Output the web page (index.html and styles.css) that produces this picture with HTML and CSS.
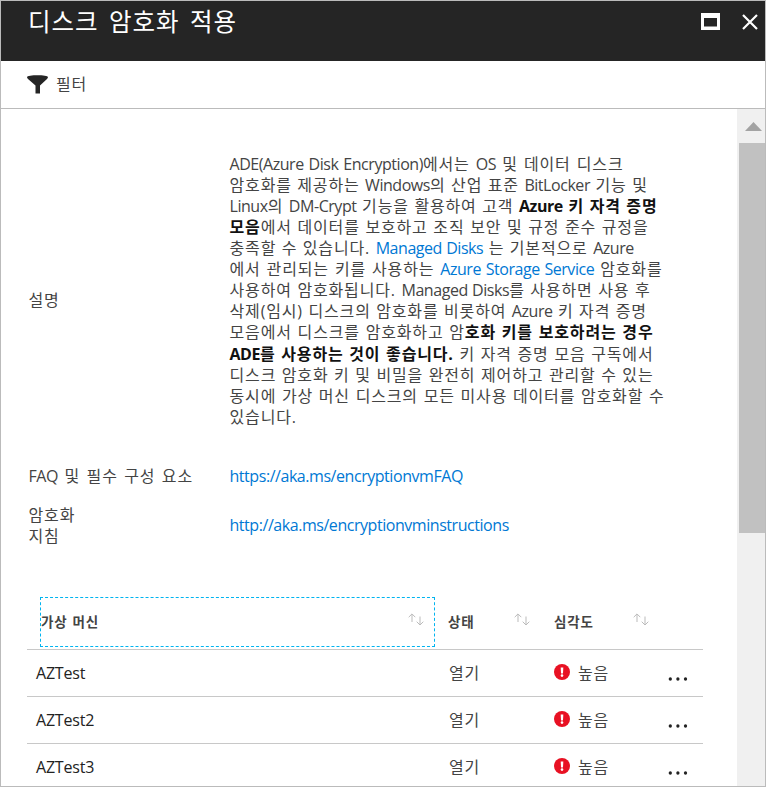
FILE: index.html
```html
<!DOCTYPE html>
<html lang="ko">
<head>
<meta charset="utf-8">
<title>디스크 암호화 적용</title>
<link rel="stylesheet" href="styles.css">
</head>
<body>
<svg width="0" height="0" class="defs">
  <symbol id="sort" viewBox="0 0 16 13"><path d="M4 9V1M.7 4.200L4 .9l3.300 3.300M12 3.500v8.300M8.700 8.700L12 12l3.300-3.300" fill="none" stroke="#bbb" stroke-width="1"/></symbol>
  <symbol id="alert" viewBox="0 0 16 16"><circle cx="8" cy="8" r="8" fill="#e81123"/><path d="M6.700 3.500h2.600L9 9.500H7z" fill="#fff"/><circle cx="8" cy="11.600" r="1.300" fill="#fff"/></symbol>
  <symbol id="more" viewBox="0 0 20 4"><g fill="#222"><circle cx="2.300" cy="2" r="1.650"/><circle cx="9.900" cy="2" r="1.650"/><circle cx="17.500" cy="2" r="1.650"/></g></symbol>
</svg>
<div class="blade">
  <header class="titlebar">
    <h1>디스크 암호화 적용</h1>
    <div class="window-buttons">
      <svg width="19" height="17" viewBox="0 0 19 17"><path fill="#fff" fill-rule="evenodd" d="M0 0h19v17H0zM3 5v8.500h13V5z"/></svg>
      <svg width="16" height="16" viewBox="0 0 16 16"><path d="M1 1l14 14M15 1L1 15" stroke="#fff" stroke-width="2.200" fill="none"/></svg>
    </div>
  </header>
  <div class="toolbar">
    <svg width="21" height="19" viewBox="0 0 21 19"><path fill="#252525" d="M0 2C0-.4 21-.4 21 2c0 .8-.5 1.400-1 2L13 10.500V18.500H8.500V10.500L1 4Q0 3 0 2z"/></svg>
    <span>필터</span>
  </div>
  <div class="body">
    <main class="content">
      <dl class="details">
        <dt>설명</dt>
        <dd class="description">
          <div><i>ADE(Azure Disk Encryption)</i>에서는 <i>OS</i> 및 데이터 디스크</div>
          <div>암호화를 제공하는 <i>Windows</i>의 산업 표준 <i>BitLocker</i> 기능 및</div>
          <div><i>Linux</i>의 <i>DM-Crypt</i> 기능을 활용하여 고객 <b><i>Azure</i> 키 자격 증명</b></div>
          <div><b>모음</b>에서 데이터를 보호하고 조직 보안 및 규정 준수 규정을</div>
          <div>충족할 수 있습니다. <a><i>Managed Disks</i></a> 는 기본적으로 <i>Azure</i></div>
          <div>에서 관리되는 키를 사용하는 <a><i>Azure Storage Service</i></a> 암호화를</div>
          <div>사용하여 암호화됩니다. <i>Managed Disks</i>를 사용하면 사용 후</div>
          <div>삭제(임시) 디스크의 암호화를 비롯하여 <i>Azure</i> 키 자격 증명</div>
          <div>모음에서 디스크를 암호화하고 암<b>호화 키를 보호하려는 경우</b></div>
          <div><b><i>ADE</i>를 사용하는 것이 좋습니다.</b> 키 자격 증명 모음 구독에서</div>
          <div>디스크 암호화 키 및 비밀을 완전히 제어하고 관리할 수 있는</div>
          <div>동시에 가상 머신 디스크의 모든 미사용 데이터를 암호화할 수</div>
          <div>있습니다.</div>
        </dd>
        <dt class="wide"><i>FAQ</i> 및 필수 구성 요소</dt>
        <dd><a><i>https://aka.ms/encryptionvmFAQ</i></a></dd>
        <dt>암호화<br>지침</dt>
        <dd><a><i>http://aka.ms/encryptionvminstructions</i></a></dd>
      </dl>
      <div class="table">
        <div class="row head">
          <div class="cell focused"><span>가상 머신</span><svg width="16" height="13"><use href="#sort"/></svg></div>
          <div class="cell"><span>상태</span><svg width="16" height="13"><use href="#sort"/></svg></div>
          <div class="cell"><span>심각도</span><svg width="16" height="13"><use href="#sort"/></svg></div>
        </div>
        <div class="row">
          <div class="name">AZTest</div><div>열기</div>
          <div class="severity"><svg width="16" height="16"><use href="#alert"/></svg>높음</div>
          <div class="more"><svg width="20" height="4"><use href="#more"/></svg></div>
        </div>
        <div class="row">
          <div class="name">AZTest2</div><div>열기</div>
          <div class="severity"><svg width="16" height="16"><use href="#alert"/></svg>높음</div>
          <div class="more"><svg width="20" height="4"><use href="#more"/></svg></div>
        </div>
        <div class="row">
          <div class="name">AZTest3</div><div>열기</div>
          <div class="severity"><svg width="16" height="16"><use href="#alert"/></svg>높음</div>
          <div class="more"><svg width="20" height="4"><use href="#more"/></svg></div>
        </div>
      </div>
    </main>
    <div class="scrollbar">
      <svg width="17" height="9" viewBox="0 0 17 9"><path d="M0 9L8.500 0 17 9z" fill="#a3a3a3"/></svg>
      <div class="thumb"></div>
    </div>
  </div>
</div>
</body>
</html>
```
FILE: styles.css
```css
* { box-sizing: border-box; }
body {
  margin: 0;
  height: 787px;
  overflow: hidden;
  background: #fff;
  color: #444;
  font: 16px/21.1px "Open Sans", "Noto Sans CJK KR", sans-serif;
  letter-spacing: .85px;
  word-spacing: .5px;
}
svg { display: block; flex: none; }
.defs { position: absolute; }
i { font-style: normal; font-size: 16px; letter-spacing: -.45px; }
b { color: #111; }
a { color: #0078d4; }

.blade { height: 787px; border: 1px solid #bbb; display: flex; flex-direction: column; overflow: hidden; }
.titlebar {
  flex: none;
  height: 60px;
  background: #252525;
  color: #fff;
  display: flex;
  justify-content: space-between;
  padding: 0 7px 0 27px;
}
h1 { margin: 0; font-size: 24.5px; font-weight: 400; line-height: 41px; letter-spacing: 1px; word-spacing: 3px; }
.window-buttons { display: flex; align-items: center; gap: 22px; height: 41px; }

.toolbar {
  flex: none;
  height: 48px;
  border-bottom: 1px solid #bbb;
  display: flex;
  align-items: center;
  padding-left: 26px;
  gap: 8px;
}
.body { flex: 1; display: flex; min-height: 0; }
.content { flex: 1; padding: 44.700px 0 0 26px; white-space: nowrap; overflow: hidden; }

.details {
  display: grid;
  grid-template-columns: 201px 1fr;
  margin: 0;
  padding-left: 1.500px;
  row-gap: 18px;
  align-items: center;
}
dd { margin: 0; }
dt { grid-column: 1; }
.wide { word-spacing: 1.500px; }
.description { margin-bottom: 19.800px; }
.description div { text-align-last: justify; width: 424px; }
.description div:nth-child(1) { width: 394px; }
.description div:nth-child(2) { width: 417px; }
.description div:nth-child(3) { width: 428px; }
.description div:nth-child(4) { width: 419px; }
.description div:nth-child(5) { width: 403px; }
.description div:nth-child(6) { width: 433px; }
.description div:nth-child(7) { width: 421px; }
.description div:nth-child(8) { width: 417px; }
.description div:nth-child(12) { width: 435px; }
.description div:nth-child(13) { text-align-last: left; }

.table { width: 676px; margin-top: 49.700px; }
.row {
  display: grid;
  grid-template-columns: 422px 105px 114px 1fr;
  height: 47px;
  padding-top: 2px;
  align-items: center;
  border-bottom: 1px solid #c8c8c8;
}
.head {
  grid-template-columns: 408px 106px 119px;
  height: 53px;
  padding-top: 0;
  align-items: start;
  font-size: 13.500px;
  font-weight: 700;
}
.cell { height: 50px; display: flex; align-items: center; justify-content: space-between; padding: 0 11px 0 13px; }
.cell span { padding-top: 2px; }
.cell svg { margin-top: -4px; }
.focused { margin-left: 13px; padding: 0 10px 0 0; border: 1px dashed #00b4f0; }
.name { padding-left: 9px; font-weight: 500; color: #222; letter-spacing: -.2px; }
.severity { display: flex; align-items: center; gap: 8px; }
.severity svg { margin-top: -3px; }
.more { margin-top: 10px; }

.scrollbar { width: 28px; background: #f0f0f0; display: flex; flex-direction: column; align-items: flex-end; }
.scrollbar svg { margin: 13px 3px 12px 0; }
.thumb { width: 26px; height: 390px; background: #c1c1c1; }
```
